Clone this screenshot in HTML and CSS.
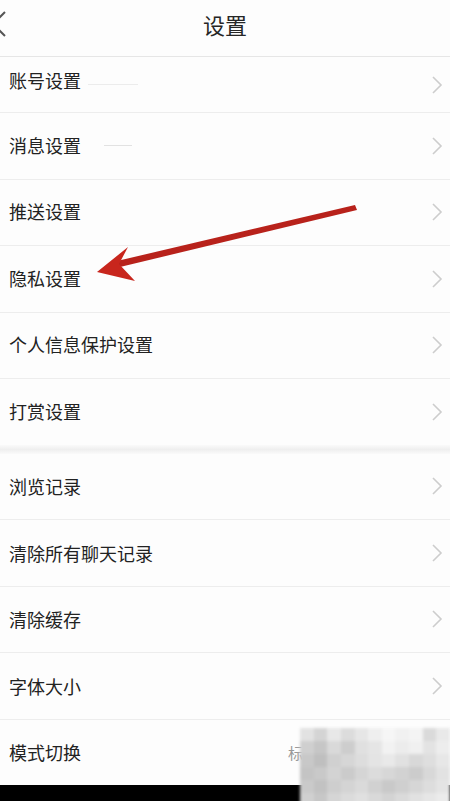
FILE: index.html
```html
<!DOCTYPE html>
<html lang="zh-CN">

<head>
  <meta name="viewport" content="width=device-width, initial-scale=1.0">
  <meta charset="utf-8">
  <title>设置</title>
  <link rel="stylesheet" href="styles.css">
</head>

<body>
  <div class="page">
    <div class="header">
      <svg class="back" width="20" height="30" viewBox="0 0 20 30">
        <polyline points="14,3 2,15 14,27" fill="none" stroke="#555" stroke-width="2" />
      </svg>
      <h1 class="title">设置</h1>
    </div>

    <ul class="group">
      <li class="row first"><span>账号设置</span><i class="smudge"></i><svg class="more" width="12" height="20" viewBox="0 0 12 20"><polyline points="2,2 10,10 2,18" /></svg></li>
      <li class="row"><span>消息设置</span><i class="smudge short"></i><svg class="more" width="12" height="20" viewBox="0 0 12 20"><polyline points="2,2 10,10 2,18" /></svg></li>
      <li class="row"><span>推送设置</span><svg class="more" width="12" height="20" viewBox="0 0 12 20"><polyline points="2,2 10,10 2,18" /></svg></li>
      <li class="row"><span>隐私设置</span><svg class="more" width="12" height="20" viewBox="0 0 12 20"><polyline points="2,2 10,10 2,18" /></svg></li>
      <li class="row"><span>个人信息保护设置</span><svg class="more" width="12" height="20" viewBox="0 0 12 20"><polyline points="2,2 10,10 2,18" /></svg></li>
      <li class="row last"><span>打赏设置</span><svg class="more" width="12" height="20" viewBox="0 0 12 20"><polyline points="2,2 10,10 2,18" /></svg></li>
    </ul>

    <div class="gap"></div>

    <ul class="group second">
      <li class="row"><span>浏览记录</span><svg class="more" width="12" height="20" viewBox="0 0 12 20"><polyline points="2,2 10,10 2,18" /></svg></li>
      <li class="row"><span>清除所有聊天记录</span><svg class="more" width="12" height="20" viewBox="0 0 12 20"><polyline points="2,2 10,10 2,18" /></svg></li>
      <li class="row"><span>清除缓存</span><svg class="more" width="12" height="20" viewBox="0 0 12 20"><polyline points="2,2 10,10 2,18" /></svg></li>
      <li class="row"><span>字体大小</span><svg class="more" width="12" height="20" viewBox="0 0 12 20"><polyline points="2,2 10,10 2,18" /></svg></li>
      <li class="row last"><span>模式切换</span><em class="value">标准模式</em></li>
    </ul>

    <div class="bar"></div>

    <!-- red annotation arrow drawn over the list -->
    <svg class="arrow" width="450" height="801" viewBox="0 0 450 801">
      <polygon points="355,205 357,210 120,267 117,261" fill="#b8221b" />
      <polygon points="97,272 128,247 119,264 135,281" fill="#c8261d" />
    </svg>

    <!-- mosaic watermark -->
    <div class="mosaic">
      <i style="background:#e2e2e2"></i><i style="background:#d4d4d4"></i><i style="background:#e8e8e8"></i><i style="background:#dcdcdc"></i><i style="background:#e6e6e6"></i><i style="background:#efefef"></i><i style="background:#f6f6f6"></i><i style="background:#f1f1f1"></i><i style="background:#f4f4f4"></i><i style="background:#dadada"></i><i style="background:#e9e9e9"></i>
      <i style="background:#cfcfcf"></i><i style="background:#c6c6c6"></i><i style="background:#d9d9d9"></i><i style="background:#cdcdcd"></i><i style="background:#e0e0e0"></i><i style="background:#e5e5e5"></i><i style="background:#f2f2f2"></i><i style="background:#ececec"></i><i style="background:#f0f0f0"></i><i style="background:#e3e3e3"></i><i style="background:#ededed"></i>
      <i style="background:#c8c8c8"></i><i style="background:#bfbfbf"></i><i style="background:#d0d0d0"></i><i style="background:#d6d6d6"></i><i style="background:#dddddd"></i><i style="background:#e4e4e4"></i><i style="background:#e9e9e9"></i><i style="background:#e1e1e1"></i><i style="background:#d8d8d8"></i><i style="background:#dedede"></i><i style="background:#e7e7e7"></i>
      <i style="background:#c4c4c4"></i><i style="background:#c9c9c9"></i><i style="background:#d3d3d3"></i><i style="background:#cbcbcb"></i><i style="background:#d5d5d5"></i><i style="background:#dcdcdc"></i><i style="background:#d7d7d7"></i><i style="background:#d2d2d2"></i><i style="background:#cccccc"></i><i style="background:#d8d8d8"></i><i style="background:#e2e2e2"></i>
      <i style="background:#cacaca"></i><i style="background:#c2c2c2"></i><i style="background:#cecece"></i><i style="background:#d4d4d4"></i><i style="background:#dadada"></i><i style="background:#d1d1d1"></i><i style="background:#c9c9c9"></i><i style="background:#cfcfcf"></i><i style="background:#d6d6d6"></i><i style="background:#dddddd"></i><i style="background:#e4e4e4"></i>
      <i style="background:#d0d0d0"></i><i style="background:#c7c7c7"></i><i style="background:#d5d5d5"></i><i style="background:#dbdbdb"></i><i style="background:#e0e0e0"></i><i style="background:#d9d9d9"></i><i style="background:#d3d3d3"></i><i style="background:#dadada"></i><i style="background:#e1e1e1"></i><i style="background:#e6e6e6"></i><i style="background:#ebebeb"></i>
    </div>
  </div>
</body>

</html>
```

FILE: styles.css
```css
body, div, ul, li, h1 {
  margin: 0;
  padding: 0;
}

ul {
  list-style: none;
}

body {
  background: #fdfdfd;
  font: 18px/1 "Noto Sans CJK SC", "Noto Sans", sans-serif;
  color: #222;
}

.page {
  position: relative;
  width: 450px;
  height: 801px;
  overflow: hidden;
  display: flex;
  flex-direction: column;
}

.header {
  height: 56px;
  border-bottom: 1px solid #e6e6e6;
  display: flex;
  align-items: center;
  justify-content: center;
  position: relative;
}

.header .back {
  position: absolute;
  left: -9px;
  top: 9px;
}

.title {
  font-size: 22px;
  font-weight: normal;
  color: #262626;
  margin-bottom: 8px;
}

.row {
  height: 65.5px;
  border-bottom: 1px solid #ededed;
  display: flex;
  align-items: center;
  padding: 0 7px 0 9px;
}

.row span {
  flex: 1;
  padding-bottom: 2px;
}

.second .row span {
  padding-bottom: 0;
}

.row.first {
  height: 55px;
}

.row.first span {
  padding-bottom: 10px;
}

.row.last {
  border-bottom: none;
}

.smudge {
  position: absolute;
  left: 88px;
  width: 50px;
  height: 1px;
  background: #ececec;
}

.smudge.short {
  left: 104px;
  width: 28px;
  background: #e2e2e2;
}

.more {
  fill: none;
  stroke: #cdcdcd;
  stroke-width: 1.6;
}

.value {
  font-style: normal;
  font-size: 15px;
  color: #999;
  margin-right: 95px;
}

.gap {
  height: 9px;
  background: linear-gradient(#fafafa, #efefef 50%, #fafafa);
}

.bar {
  flex: 1;
  background: #000;
}

.arrow {
  position: absolute;
  left: 0;
  top: 0;
}

.mosaic {
  position: absolute;
  left: 300px;
  top: 728px;
  width: 150px;
  height: 78px;
  display: grid;
  grid-template-columns: repeat(11, 1fr);
  grid-template-rows: repeat(6, 1fr);
  filter: blur(1.5px);
}
```
